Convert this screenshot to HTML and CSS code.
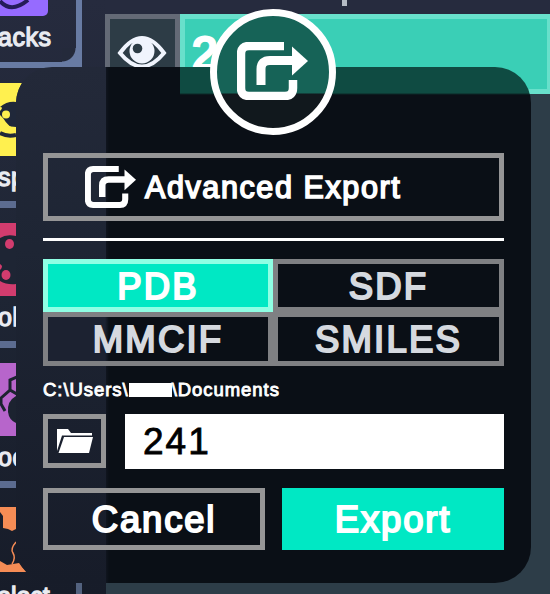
FILE: index.html
```html
<!DOCTYPE html>
<html lang="en">
<head>
<meta charset="utf-8">
<title>Export</title>
<link rel="stylesheet" href="styles.css">
</head>
<body>
<svg width="0" height="0" class="defs">
  <symbol id="share" viewBox="0 0 71 58">
    <path d="M47 4H12Q4 4 4 12V46Q4 54 12 54H48Q56 54 56 46V38" fill="none" stroke="currentColor" stroke-width="8.5"/>
    <path d="M24 43V27Q24 18.500 33 18.500H57" fill="none" stroke="currentColor" stroke-width="9"/>
    <path d="M55 4.500L71 19L55 33.500Z" fill="currentColor"/>
  </symbol>
</svg>
<div class="screen">
  <aside class="sidebar">
    <section class="card first"><div class="tile violet"><svg width="48" height="16"><path d="M0 1Q11 14 28 0" fill="none" stroke="#251c59" stroke-width="4"/></svg></div><span class="label">acks</span></section>
    <section class="card"><div class="tile yellow"><svg width="22" height="73"><path d="M16 0H22Q17 8 16 19Z" fill="#fff04f"/><path d="M0 24Q7 18 16 19V46Q9 45 3 35L0 32V28Q4 24 0 24Z" fill="#20283a"/><circle cx="6" cy="31.500" r="4" fill="#fff04f"/><path d="M0 36Q5 44 16 44V48Q6 49 0 43Z" fill="#fff04f"/><path d="M0 50Q7 54 16 52" fill="none" stroke="#20283a" stroke-width="4"/></svg></div><span class="label">sp</span></section>
    <section class="card"><div class="tile pink"><svg width="16" height="73"><path d="M0 15Q6 11 16 13V61Q7 62 0 58V47Q4 43 0 41Z" fill="#1e2534"/><ellipse cx="9.500" cy="21" rx="4.500" ry="5" fill="#d23c6e"/><ellipse cx="6" cy="52" rx="4.500" ry="5" fill="#d23c6e"/></svg></div><span class="label">ol</span></section>
    <section class="card"><div class="tile purple"><svg width="16" height="73"><path d="M17 14L10 17V27L1 35V41L5 48M10 27L17 31" fill="none" stroke="#1c2330" stroke-width="3"/><path d="M16 33Q7 38 8 49Q9 57 16 60Z" fill="#1c2330"/></svg></div><span class="label">oc</span></section>
    <section class="card last"><div class="tile orange"><svg width="28" height="65"><path d="M0 0H16V22L12 24L8 22L3 21V9L0 5Z" fill="#f58c55"/><path d="M16 35Q10 42 13 46Q16 51 12 57" fill="none" stroke="#f58c55" stroke-width="1.500"/><path d="M0 54L7 58L19 56L22 60L27 65H0Z" fill="#f58c55"/></svg></div><span class="label">elect</span></section>
  </aside>
  <main class="workspace">
    <div class="tick"></div>
    <div class="row">
      <div class="eye"><svg width="50" height="34" viewBox="0 0 50 34"><path d="M3 17Q25-13 47 17Q25 44 3 17Z" fill="none" stroke="#f0f4fd" stroke-width="4"/><circle cx="25" cy="15" r="12.500" fill="#f0f4fd"/><circle cx="20.500" cy="12.500" r="4.800" fill="#2d3c46"/></svg></div>
      <div class="entry">2</div>
    </div>
  </main>
  <div class="dialog">
    <button class="btn advanced"><svg class="share-small"><use href="#share"/></svg><span>Advanced Export</span></button>
    <hr>
    <div class="formats">
      <div class="format on">PDB</div><div class="format">SDF</div>
      <div class="format">MMCIF</div><div class="format">SMILES</div>
    </div>
    <div class="path"><span>C:\Users\</span><i class="mask"></i><span>\Documents</span></div>
    <div class="file">
      <button class="btn folder"><svg width="38" height="26" viewBox="0 0 38 26"><path d="M1 1H12L15 5H36V7.500H6L1 23Z" fill="#fff"/><path d="M8 9H37L33 25H2.500Z" fill="#fff"/></svg></button>
      <div class="name">241</div>
    </div>
    <div class="actions"><button class="btn cancel">Cancel</button><button class="btn export">Export</button></div>
  </div>
  <div class="badge"><svg class="share-large"><use href="#share"/></svg></div>
</div>
</body>
</html>
```
FILE: styles.css
```css
* { box-sizing: border-box; }
body { margin: 0; font-family: "Liberation Sans", Arial, sans-serif; }
.defs { position: absolute; }
.screen { position: relative; z-index: 0; width: 550px; height: 594px; overflow: hidden; display: flex; background: #2d3d48; }
.sidebar { width: 106px; height: 594px; overflow: hidden; flex: none; background: linear-gradient(#262b3e, #1e2534 50%, #171c29); }
.card { width: 82px; height: 140px; border-right: 6px solid #53627f; border-bottom: 7px solid #5c6c90; padding-top: 15px; overflow: hidden; }
.card.first { height: 68px; padding-top: 0; border-color: #687ba3; border-bottom-width: 6px; background: radial-gradient(circle at 0 0, #242a3b 13px, #687ba3 14px) right bottom / 14px 14px no-repeat; }
.tile { height: 73px; width: 16px; }
.tile svg { display: block; }
.violet { width: 48px; height: 16px; background: #966bff; border-radius: 0 0 5px 0; }
.yellow { background: #fff04f; }
.pink { background: #d23c6e; }
.purple { background: #b765cb; }
.orange { height: 65px; margin-top: 4px; }
.label { display: block; height: 32px; margin: 5px 0 0 -2px; font-size: 25px; line-height: 32px; color: #e9ebf1; -webkit-text-stroke: 1.3px #e9ebf1; letter-spacing: .5px; white-space: nowrap; }
.last .label { margin-top: 8px; margin-left: -3px; letter-spacing: 0; }
.workspace { flex: 1; position: relative; }
.tick { width: 5px; height: 6px; margin: 0 0 8px 236px; background: #b5bcc5; }
.workspace::before { content: ""; position: absolute; inset: 0 0 auto; height: 14px; background: #262b3e; z-index: -1; }
.row { display: flex; height: 80px; margin-left: -1px; }
.eye { width: 75px; border: 5px solid #646a76; border-bottom: 0; background: #2d3c46; padding: 17px 0 0 7px; }
.entry { flex: 1; border: 5px solid #68e0cb; border-right-width: 3px; background: #3acfb6; color: #fff; font-size: 46px; line-height: 66px; padding-left: 7px; padding-top: 1px; -webkit-text-stroke: 3px #fff; }
.dialog { position: absolute; left: 16px; top: 67px; width: 515px; height: 516px; padding: 86px 27px 0; border-radius: 36px; overflow: hidden;
  background:
    linear-gradient(#0f4b42 26px, #0b2726 27px, transparent 28px) 164px 0 / 351px 28px no-repeat,
    linear-gradient(#232939, #1e2534 35%, #171c29) 0 0 / 90px 100% no-repeat,
    linear-gradient(90deg, #10151f 90px, #0a0f16 93px); }
.btn { display: flex; align-items: center; justify-content: center; margin: 0; padding: 0; border: 5px solid #959596; background: transparent; color: #fff; font: 35px "Liberation Sans", Arial, sans-serif; }
.advanced { width: 461px; height: 68px; justify-content: flex-start; padding-left: 37px; font-size: 30.500px; letter-spacing: 1.600px; -webkit-text-stroke: 1.6px #fff; }
.share-small { width: 51px; height: 42px; margin-right: 9px; }
.advanced span { padding-top: 1px; }
hr { height: 3px; margin: 17px 0 18px; border: 0; background: #fff; }
.formats { display: grid; grid-template-columns: 230px 231px; grid-template-rows: 53px 54px; background: #7f8083; }
.format { display: flex; align-items: center; justify-content: center; border: 5px solid #7f8083; background: #0a0f16; color: #d5d9df; font-size: 36.500px; padding-top: 2px; letter-spacing: 2.200px; -webkit-text-stroke: 2px #d5d9df; }
.format:nth-child(3) { background: linear-gradient(90deg, #1c2231 57px, #0a0f16 61px); }
.format.on { border-color: #8fffe4; background: #00e8c4; color: #fff; -webkit-text-stroke-color: #fff; }
.path { display: flex; align-items: center; height: 24px; margin: 12px 0; color: #fff; font-size: 18.500px; letter-spacing: .95px; -webkit-text-stroke: .9px #fff; white-space: pre; }
.mask { width: 43px; height: 14px; background: #fff; }
.file { display: flex; justify-content: space-between; height: 55px; }
.folder { width: 63px; height: 54px; }
.name { width: 379px; height: 55px; background: #fff; color: #000; font-size: 37px; line-height: 56px; padding-left: 18px; letter-spacing: 2px; -webkit-text-stroke: .8px #000; }
.actions { display: flex; justify-content: space-between; height: 62px; margin-top: 19px; }
.cancel, .export { width: 222px; padding-top: 2px; font-size: 36.500px; letter-spacing: 1.800px; -webkit-text-stroke: 1.9px #fff; }
.export { border: 0; background: #00e8c4; }
.badge { position: absolute; left: 210px; top: 9px; width: 126px; height: 126px; border: 7.500px solid #fff; border-radius: 50%; background: linear-gradient(#166357 77px, #11181d 78px); color: #fff; padding: 26px 0 0 20px; }
.share-large { display: block; width: 71px; height: 58px; }
```
